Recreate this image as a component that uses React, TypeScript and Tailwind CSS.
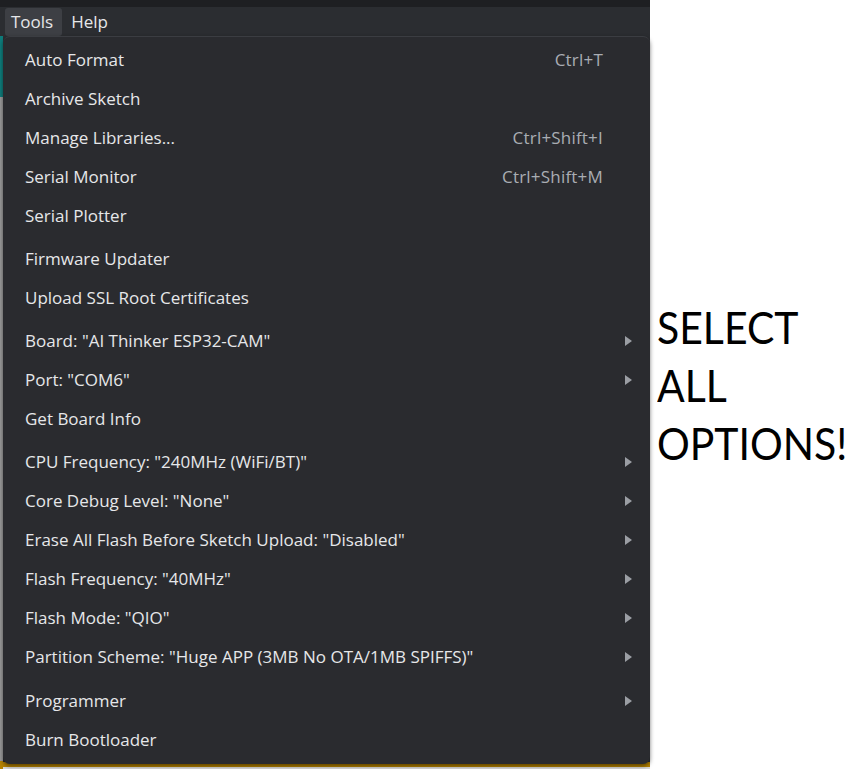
import React from 'react';

type Item = { label: string; shortcut?: string; submenu?: boolean };

const groups: Item[][] = [
    [
        { label: 'Auto Format', shortcut: 'Ctrl+T' },
        { label: 'Archive Sketch' },
        { label: 'Manage Libraries...', shortcut: 'Ctrl+Shift+I' },
        { label: 'Serial Monitor', shortcut: 'Ctrl+Shift+M' },
        { label: 'Serial Plotter' },
    ],
    [{ label: 'Firmware Updater' }, { label: 'Upload SSL Root Certificates' }],
    [
        { label: 'Board: "AI Thinker ESP32-CAM"', submenu: true },
        { label: 'Port: "COM6"', submenu: true },
        { label: 'Get Board Info' },
    ],
    [
        { label: 'CPU Frequency: "240MHz (WiFi/BT)"', submenu: true },
        { label: 'Core Debug Level: "None"', submenu: true },
        { label: 'Erase All Flash Before Sketch Upload: "Disabled"', submenu: true },
        { label: 'Flash Frequency: "40MHz"', submenu: true },
        { label: 'Flash Mode: "QIO"', submenu: true },
        { label: 'Partition Scheme: "Huge APP (3MB No OTA/1MB SPIFFS)"', submenu: true },
    ],
    [{ label: 'Programmer', submenu: true }, { label: 'Burn Bootloader' }],
];

const MenuRow: React.FC<{ item: Item }> = ({ item }) => (
    <div className="h-[39px] flex items-center pl-[22px] pr-[17px] text-[#e6e7e9]">
        <span className="flex-1 whitespace-nowrap">{item.label}</span>
        {item.shortcut && <span className="text-[#a9adb3] mr-[30px] tracking-[0.2px]">{item.shortcut}</span>}
        {item.submenu && (
            <svg width="9" height="12" viewBox="0 0 9 12">
                <path d="M1 1 L8 6 L1 11 Z" fill="#9b9ea4" />
            </svg>
        )}
    </div>
);

const App: React.FC = () => {
    return (
        <div className="w-[862px] h-[769px] bg-white flex overflow-hidden">
            {/* IDE side with the open Tools menu */}
            <div className="w-[650px] shrink-0 h-full bg-[#2b2d31] flex flex-col relative" style={{ fontFamily: '"Open Sans", "Noto Sans", sans-serif' }}>
                <div className="h-[7px] bg-[#1e1f22]" />
                <div className="h-[29px] flex items-center gap-[9px] pl-[5px] text-[17px] text-[#e6e7e9]">
                    <span className="pl-[6px] pr-[9px] h-[28px] flex items-center rounded-[3px] bg-[#3d3f44]">Tools</span>
                    <span className="h-[28px] flex items-center">Help</span>
                </div>
                <div className="flex-1 flex">
                    <div className="w-[3px] flex flex-col">
                        <div className="h-[61px] bg-[#0e7c7b]" />
                        <div className="flex-1 bg-[#9a9a9a]" />
                        <div className="h-[8px] bg-[#b58200]" />
                    </div>
                    <div className="flex-1 flex flex-col">
                        <div className="flex-1" />
                        <div className="h-[5px] bg-[#b58200]" />
                        <div className="h-[2px] bg-[#d8d8d8]" />
                    </div>
                </div>

                {/* dropdown */}
                <div className="absolute left-[3px] top-[36px] w-[647px] h-[728px] bg-[#2a2b2f] rounded-[7px] border-t border-[#3b3d42] pt-[3px] text-[17px] shadow-[0_2px_4px_rgba(0,0,0,0.5)]">
                    {groups.map((group, gi) => (
                        <div key={gi} className={gi === 0 ? '' : gi === 4 ? 'mt-[5px]' : 'mt-[4px]'}>
                            {group.map((item) => (
                                <MenuRow key={item.label} item={item} />
                            ))}
                        </div>
                    ))}
                </div>
            </div>

            {/* note on the right */}
            <div className="flex-1 pl-[7px] pt-[298px] text-black text-[45px] leading-[58px]" style={{ fontFamily: 'Lato, "Open Sans", sans-serif' }}>
                <div className="origin-left scale-x-[0.91] whitespace-nowrap">SELECT</div>
                <div className="origin-left scale-x-[0.91] whitespace-nowrap">ALL</div>
                <div className="origin-left scale-x-[0.91] whitespace-nowrap">OPTIONS!</div>
            </div>
        </div>
    );
};

export default App;
